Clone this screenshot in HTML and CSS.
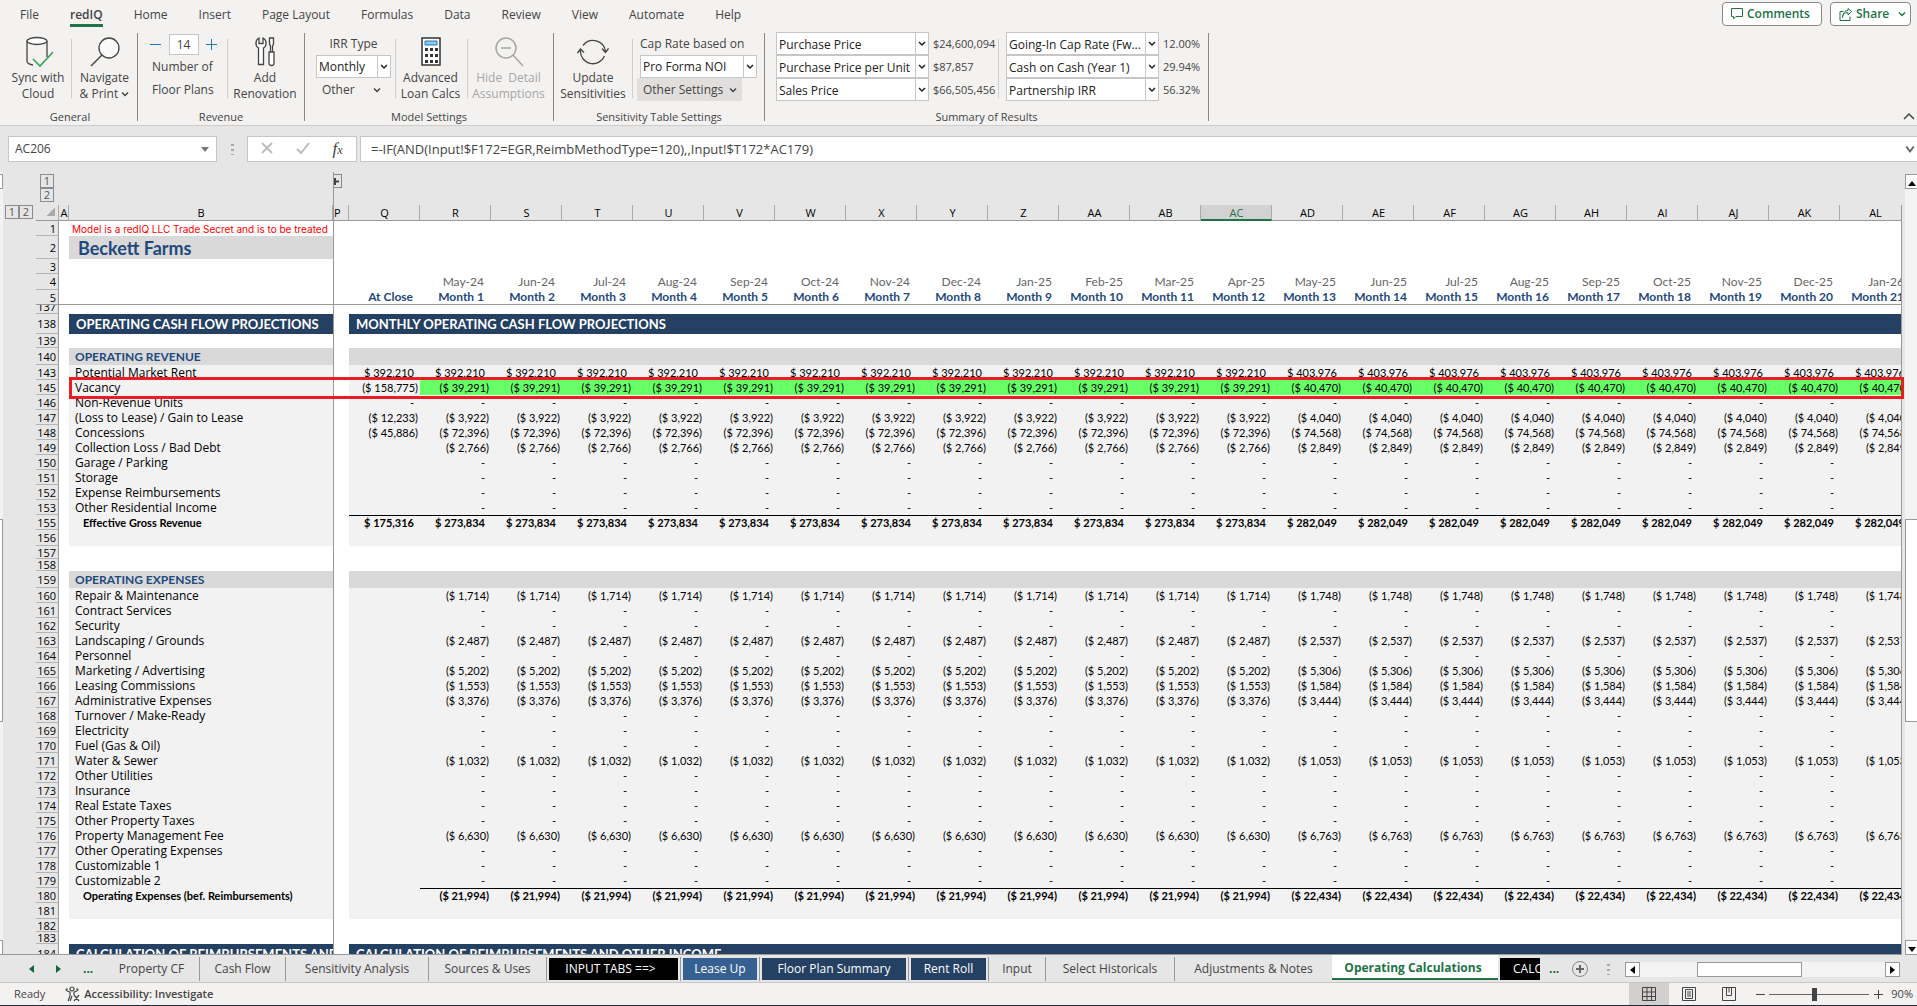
FILE: index.html
```html
<!DOCTYPE html>
<html lang="en">
<head>
<meta charset="utf-8">
<title>Beckett Farms - Operating Calculations</title>
<link rel="stylesheet" href="styles.css">
</head>
<body>
<svg class="defs" aria-hidden="true">
  <symbol id="chev" viewBox="0 0 8 8"><path d="M1 2.5l3 3 3-3" fill="none" stroke="currentColor" stroke-width="1.5"/></symbol>
</svg>
<header class="ribbon">
  <div class="menu">
    <nav class="tabs">
      <a class="tab t-file" href="#">File</a><a class="tab t-rediq active" href="#">redIQ</a><a class="tab" href="#">Home</a><a class="tab" href="#">Insert</a><a class="tab" href="#">Page Layout</a><a class="tab" href="#">Formulas</a><a class="tab" href="#">Data</a><a class="tab" href="#">Review</a><a class="tab" href="#">View</a><a class="tab" href="#">Automate</a><a class="tab" href="#">Help</a>
    </nav>
    <div class="actions">
      <button class="act act-comments"><svg width="12" height="12" viewBox="0 0 12 12"><path d="M.5.5h11v8H5L2.500 11V8.500h-2z" fill="none" stroke="currentColor"/></svg>Comments</button>
      <button class="act act-share"><svg width="13" height="13" viewBox="0 0 13 13"><path d="M4.500 3.500H1v9h10V8.500M3.500 9.500C3.500 6 6 4.500 9 4.500V7l3.500-3.500L9 .5v2C6 2.500 4 5 3.500 9.500" fill="none" stroke="currentColor"/></svg>Share<svg class="share-chev" width="8" height="8"><use href="#chev"/></svg></button>
    </div>
  </div>
  <div class="groups">
    <section class="group g-general">
      <div class="tools">
        <button class="big w-sync"><svg width="30" height="32" viewBox="-2 0 30 32"><g fill="none" stroke="#444" stroke-width="1.300"><path d="M2 5v20c0 2 3 3.500 6 4M22 5v16"/><ellipse cx="12" cy="5" rx="10" ry="3.500" fill="#fff"/><path d="M8 23l7 7L28 16" stroke="#3aa35b" stroke-width="1.600"/></g></svg><span>Sync with<br>Cloud</span></button>
        <i class="sep"></i>
        <button class="big w-nav"><svg width="30" height="32" viewBox="0 0 30 32"><circle cx="19" cy="12" r="10" fill="#fafafa" stroke="#444" stroke-width="1.300"/><path d="M12 19L1 30" stroke="#444" stroke-width="1.500"/></svg><span>Navigate<br>&amp; Print <svg width="8" height="8"><use href="#chev"/></svg></span></button>
      </div>
      <h2>General</h2>
    </section>
    <section class="group g-revenue">
      <div class="tools">
        <div class="stack w-plans">
          <div class="stepper"><button class="step" aria-label="Fewer"><svg width="11" height="11" viewBox="0 0 11 11"><path d="M0 5.500h11" stroke="#1e7ac0"/></svg></button><input id="plans" value="14"><button class="step" aria-label="More"><svg width="11" height="11" viewBox="0 0 11 11"><path d="M0 5.500h11M5.500 0v11" stroke="#1e7ac0"/></svg></button></div>
          <label for="plans">Number of<br>Floor Plans</label>
        </div>
        <i class="sep"></i>
        <button class="big w-reno"><svg width="20" height="32" viewBox="0 0 20 32"><g fill="#fff" stroke="#444" stroke-width="1.300"><path d="M4 2C0 4 0 10 3.500 12v16.500h5V12C12 10 12 4 8 2v5.500H4z"/><path d="M14.500 2h4v6l-1 2v6h-2v-6l-1-2zM14 16h5v11a2.500 2.500 0 01-5 0z"/></g></svg><span>Add<br>Renovation</span></button>
      </div>
      <h2>Revenue</h2>
    </section>
    <section class="group g-model">
      <div class="tools">
        <div class="stack w-irr">
          <label class="cap center" for="irr">IRR Type</label>
          <span class="combo w75"><select id="irr"><option>Monthly</option></select><svg width="8" height="8"><use href="#chev"/></svg></span>
          <button class="drop">Other<svg width="8" height="8"><use href="#chev"/></svg></button>
        </div>
        <i class="sep"></i>
        <button class="big w-adv"><svg width="20" height="32" viewBox="0 0 20 32"><rect x="1" y="2" width="18" height="27" fill="#fff" stroke="#333" stroke-width="1.500"/><path d="M4 5h12v4H4z" fill="#8ec9f0" stroke="#2878b8"/><path d="M4 12h3v3H4zm5 0h3v3H9zm5 0h3v3h-3zM4 18h3v3H4zm5 0h3v3H9zm5 0h3v3h-3zM4 24h3v3H4zm5 0h3v3H9zm5 0h3v3h-3z" fill="#333"/></svg><span>Advanced<br>Loan Calcs</span></button>
        <i class="sep"></i>
        <button class="big w-hide" disabled><svg width="32" height="32" viewBox="0 0 32 32"><g fill="none" stroke="#a6a6a6" stroke-width="1.500"><circle cx="13" cy="12" r="10"/><path d="M8 12h10M20 19l10 11"/></g></svg><span>Hide&nbsp; Detail<br>Assumptions</span></button>
      </div>
      <h2>Model Settings</h2>
    </section>
    <section class="group g-sens">
      <div class="tools">
        <button class="big w-upd"><svg width="32" height="32" viewBox="0 0 32 32"><g fill="none" stroke="#444" stroke-width="1.300"><path d="M6 9.500A12.500 12.500 0 0128.500 15.500M27.500 20A12.500 12.500 0 013.500 14M25 12.500l3.500 4 3-4M.5 17l3-4 3.500 3.500"/></g></svg><span>Update<br>Sensitivities</span></button>
        <i class="sep"></i>
        <div class="stack w-cap">
          <label class="cap" for="cap">Cap Rate based on</label>
          <span class="combo w117"><select id="cap"><option>Pro Forma NOI</option></select><svg width="8" height="8"><use href="#chev"/></svg></span>
          <button class="drop shaded">Other Settings<svg width="8" height="8"><use href="#chev"/></svg></button>
        </div>
      </div>
      <h2>Sensitivity Table Settings</h2>
    </section>
    <section class="group g-sum">
      <div class="tools">
        <div class="results w-sum">
          <span class="combo"><select aria-label="Result 1"><option>Purchase Price</option></select><svg width="8" height="8"><use href="#chev"/></svg></span><output>$24,600,094</output>
          <span class="combo"><select aria-label="Result 2"><option>Purchase Price per Unit</option></select><svg width="8" height="8"><use href="#chev"/></svg></span><output>$87,857</output>
          <span class="combo"><select aria-label="Result 3"><option>Sales Price</option></select><svg width="8" height="8"><use href="#chev"/></svg></span><output>$66,505,456</output>
        </div>
        <i class="sep"></i>
        <div class="results">
          <span class="combo"><select aria-label="Result 4"><option>Going-In Cap Rate (Fw...</option></select><svg width="8" height="8"><use href="#chev"/></svg></span><output>12.00%</output>
          <span class="combo"><select aria-label="Result 5"><option>Cash on Cash (Year 1)</option></select><svg width="8" height="8"><use href="#chev"/></svg></span><output>29.94%</output>
          <span class="combo"><select aria-label="Result 6"><option>Partnership IRR</option></select><svg width="8" height="8"><use href="#chev"/></svg></span><output>56.32%</output>
        </div>
      </div>
      <h2>Summary of Results</h2>
    </section>
    <button class="collapse" aria-label="Collapse ribbon"><svg width="12" height="8" viewBox="0 0 12 8"><path d="M1 7l5-5 5 5" fill="none" stroke="#444" stroke-width="1.500"/></svg></button>
  </div>
</header>

<div class="formula-bar">
  <div class="namebox"><input aria-label="Name box" value="AC206"><svg width="8" height="5" viewBox="0 0 8 5"><path d="M0 0h8L4 5z" fill="#777"/></svg></div>
  <span class="dots"></span>
  <div class="fx">
    <button aria-label="Cancel"><svg width="12" height="12" viewBox="0 0 12 12"><path d="M1 1l10 10M11 1L1 11" stroke="#bbb" stroke-width="1.800"/></svg></button>
    <button aria-label="Enter"><svg width="14" height="12" viewBox="0 0 14 12"><path d="M1 7l4 4 8-10" fill="none" stroke="#bbb" stroke-width="2"/></svg></button>
    <button class="fn" aria-label="Insert function"><i>f<small>x</small></i></button>
  </div>
  <div class="formula"><input aria-label="Formula" value="=-IF(AND(Input!$F172=EGR,ReimbMethodType=120),,Input!$T172*AC179)"><svg width="10" height="10" viewBox="0 0 8 8"><path d="M1 2l3 4 3-4" fill="none" stroke="#666" stroke-width="1.500"/></svg></div>
</div>

<main class="work">
  <div class="edge"><i class="cap-box"></i><i class="thumb"></i><i class="cap-box end"></i></div>
  <div class="pane">
    <div class="outline">
      <div class="col-levels"><button class="lvl">1</button><button class="lvl">2</button></div>
      <div class="expand"><button class="plus" aria-label="Expand columns"><svg width="7" height="9" viewBox="0 0 7 9"><path d="M0 4.500h5M1 1v7" stroke="#444" stroke-width="2"/></svg></button></div>
    </div>
    <div class="grid-wrap">
      <div class="gutter"><button class="lvl">1</button><button class="lvl">2</button></div>
      <div class="grid"><table id="sheet"><colgroup><col class="c-n"><col class="c-a"><col class="c-b"><col class="c-p"><col class="c-v" span="22"></colgroup><thead></thead><tbody></tbody></table></div>
    </div>
    <div class="marker"></div>
  </div>
  <div class="vscroll"><button aria-label="Scroll up"><svg width="8" height="5" viewBox="0 0 8 5"><path d="M0 5h8L4 0z"/></svg></button><i class="thumb"></i><button class="end" aria-label="Scroll down"><svg width="8" height="5" viewBox="0 0 8 5"><path d="M0 0h8L4 5z"/></svg></button></div>
</main>

<nav class="sheets">
  <div class="nav-arrows"><button aria-label="Previous"><svg width="5" height="8" viewBox="0 0 5 8"><path d="M5 0v8L0 4z"/></svg></button><button aria-label="Next"><svg width="5" height="8" viewBox="0 0 5 8"><path d="M0 0v8l5-4z"/></svg></button><button>...</button></div>
  <a class="st s96" href="#">Property CF</a><a class="st s86" href="#">Cash Flow</a><a class="st s143" href="#">Sensitivity Analysis</a><a class="st s118" href="#">Sources &amp; Uses</a><a class="st s134" href="#"><b class="black">INPUT TABS ==&gt;</b></a><a class="st s79" href="#"><b class="blue">Lease Up</b></a><a class="st s149" href="#"><b class="navy">Floor Plan Summary</b></a><a class="st s80" href="#"><b class="navy">Rent Roll</b></a><a class="st s57" href="#">Input</a><a class="st s129" href="#">Select Historicals</a><a class="st s157 last" href="#">Adjustments &amp; Notes</a><a class="st current" href="#">Operating Calculations</a><a class="st cut" href="#"><b class="black">CALC</b></a>
  <button class="more">...</button>
  <button class="add" aria-label="New sheet"><svg width="18" height="18" viewBox="0 0 18 18"><circle cx="9" cy="9" r="7.500" fill="none" stroke="#888"/><path d="M9 5v8M5 9h8" stroke="#666" stroke-width="2"/></svg></button>
  <span class="dots"></span>
  <div class="hscroll"><button aria-label="Scroll left"><svg width="5" height="8" viewBox="0 0 5 8"><path d="M5 0v8L0 4z"/></svg></button><i class="hthumb"></i><button aria-label="Scroll right"><svg width="5" height="8" viewBox="0 0 5 8"><path d="M0 0v8l5-4z"/></svg></button></div>
</nav>

<footer class="status">
  <span class="ready">Ready</span>
  <button class="access"><svg width="16" height="16" viewBox="0 0 16 16"><g fill="none" stroke="#444" stroke-width="1.200"><circle cx="7" cy="3" r="2"/><path d="M1 3c0 2 3 3 4 3v4l-2 5M13 3c0 2-3 3-4 3v3M7 10l-2 5M9 9l5 6M14 9l-5 6M1 3h2M11 3h2"/></g></svg>Accessibility: Investigate</button>
  <div class="views">
    <button class="on" aria-label="Normal"><svg width="14" height="14" viewBox="0 0 14 14"><path d="M.5.5h13v13H.5zM.5 5h13M.5 9.500h13M5 .5v13M9.500.5v13" fill="none" stroke="#444"/></svg></button>
    <button aria-label="Page layout"><svg width="14" height="14" viewBox="0 0 14 14"><path d="M.5.5h13v13H.5zM3.500 2.500h7v9h-7zM5 5h4M5 7h4M5 9h4" fill="none" stroke="#444"/></svg></button>
    <button aria-label="Page break"><svg width="14" height="14" viewBox="0 0 14 14"><path d="M.5.5h13v13H.5zM4.500 .5v8h5V.5M7 .5v5" fill="none" stroke="#444"/></svg></button>
  </div>
  <button class="zoom-btn" aria-label="Zoom out"><svg width="9" height="9" viewBox="0 0 9 9"><path d="M0 4.500h9" stroke="#444"/></svg></button>
  <input class="zoom" type="range" aria-label="Zoom" min="0" max="100" value="45">
  <button class="zoom-btn" aria-label="Zoom in"><svg width="9" height="9" viewBox="0 0 9 9"><path d="M0 4.500h9M4.500 0v9" stroke="#444"/></svg></button>
  <span class="pct">90%</span>
</footer>
<script src="sheet.js"></script>
</body>
</html>
```
FILE: styles.css
```css
* { box-sizing: border-box; }
html, body { height: 100%; }
body { margin: 0; display: flex; flex-direction: column; overflow: hidden; background: #e6e6e6; color: #444; font: 12px/16px "Open Sans", "Noto Sans", sans-serif; }
button { margin: 0; padding: 0; border: 0; background: none; color: inherit; font: inherit; }
input, select { font: inherit; color: inherit; border: 0; padding: 0; margin: 0; min-width: 0; outline: 0; }
a { color: inherit; text-decoration: none; }
.defs { display: none; }

/* Ribbon */
.ribbon { flex: none; background: #f3f2f1; border-bottom: 1px solid #cfcdcb; height: 126px; }
.menu { display: flex; justify-content: space-between; height: 30px; }
.tabs { display: flex; padding-left: 20px; gap: 31px; }
.tab { height: 27px; padding-top: 7px; white-space: nowrap; }
.t-rediq { font-weight: 600; border-bottom: 3px solid #217346; }
.actions { display: flex; gap: 8px; padding: 2px 6px 0 0; }
.act { display: flex; align-items: center; gap: 4px; height: 24px; padding: 0 8px; border: 1px solid #8a8886; border-radius: 4px; background: #fff; color: #217346; font-weight: 600; }
.act-comments { width: 100px; }
.act-share { width: 81px; }
.share-chev { margin-left: auto; margin-right: -4px; }
.groups { display: flex; position: relative; padding-left: 3px; }
.group { display: flex; flex-direction: column; height: 88px; margin-top: 3px; border-right: 1px solid #8a8886; }
.group h2 { margin: auto 0 0; font-size: 11px; line-height: 8px; font-weight: 400; text-align: center; }
.g-general { width: 135px; }
.g-revenue { width: 167px; }
.g-model { width: 249px; }
.g-sens { width: 211px; }
.g-sum { width: 444px; }
.tools { display: flex; height: 70px; }
.sep { width: 1px; margin: 6px 0 5px; background: #d0cecc; flex: none; }
.big { display: flex; flex-direction: column; align-items: center; gap: 2px; padding-top: 3px; white-space: nowrap; flex: none; }
.big:disabled { color: #a6a6a6; }
.w-sync { width: 68px; padding-left: 2px; }
.w-nav { flex: 1; }
.w-reno { flex: 1; padding-right: 2px; }
.w-adv { width: 71px; padding-right: 2px; }
.w-hide { flex: 1; padding-right: 4px; }
.w-upd { width: 78px; }
.stack { display: flex; flex-direction: column; }
.w-plans { width: 89px; }
.w-plans label { line-height: 23px; padding-left: 14px; }
.stepper { display: flex; align-items: center; justify-content: center; gap: 6px; height: 22px; padding-left: 2px; }
.stepper input { width: 30px; height: 21px; border: 1px solid #c8c6c4; background: #fff; text-align: center; }
.step { width: 14px; line-height: 8px; }
.w-irr { width: 90px; padding: 0 4px 0 11px; }
.cap { height: 22px; line-height: 22px; }
.center { text-align: center; }
.combo { display: flex; align-items: center; width: 153px; height: 23px; border: 1px solid #c8c6c4; background: #fff; color: #222; }
.combo select { flex: 1; height: 21px; padding-left: 2px; appearance: none; background: none; }
.combo svg { width: 13px; height: 21px; padding: 6px 2px; border-left: 1px solid #c8c6c4; flex: none; }
.w75 { width: 75px; }
.w117 { width: 117px; }
.drop { display: flex; align-items: center; justify-content: space-between; height: 23px; padding: 0 10px 0 6px; }
.w-cap { padding-left: 7px; }
.shaded { width: 105px; margin-left: -3px; padding: 0 5px 0 6px; background: #e1dfdd; }
.results { display: grid; grid-template-columns: 153px auto; grid-auto-rows: 23px; column-gap: 4px; margin-left: 7px; margin-top: -1px; line-height: 23px; align-content: start; }
.results output { font-size: 11px; }
.w-sum { margin-left: 11px; width: 222px; }
.collapse { position: absolute; right: 2px; bottom: 0; height: 10px; line-height: 8px; }

/* Formula bar */
.formula-bar { flex: none; display: flex; align-items: center; height: 46px; padding: 0 0 0 8px; }
.namebox, .fx, .formula { display: flex; align-items: center; height: 26px; background: #fff; border: 1px solid #c6c6c6; font-size: 13px; }
.namebox { width: 209px; padding: 0 7px 0 6px; }
.namebox input { flex: 1; font-size: 12px; }
.dots { width: 3px; height: 11px; margin: 0 13px 0 14px; background: repeating-linear-gradient(#aaa 0 2px, transparent 2px 5px); flex: none; }
.fx { width: 110px; justify-content: space-around; padding: 0 2px; }
.fn { font: 17px/20px "Liberation Serif", serif; }
.fn small { font-size: 12px; }
.formula { flex: 1; margin-left: 3px; border-right: 0; padding: 0 2px 0 10px; }
.formula input { flex: 1; background: none; }

/* Work area */
.work { flex: 1; min-height: 0; display: flex; }
.edge, .vscroll { display: grid; grid-template-rows: 15px 330fr 203fr 218fr 15px; padding-top: 2px; flex: none; }
.edge { width: 3px; background: #f3f3f3; }
.edge i, .vscroll i, .vscroll button { border: 1px solid #999; background: #fff; }
.edge i { border-left: 0; }
.thumb { grid-row: 3; }
.end { grid-row: 5; }
.pane { flex: 1; min-width: 0; position: relative; display: flex; flex-direction: column; border-bottom: 1px solid #999; }
.outline { display: flex; height: 33px; flex: none; padding-left: 37px; }
.col-levels { display: flex; flex-direction: column; width: 293px; padding-top: 2px; }
.lvl { width: 14px; height: 14px; border: 1px solid #888c94; font-size: 11px; line-height: 12px; color: #555; flex: none; text-align: center; }
.expand { border-left: 1px solid #999; padding-top: 2px; }
.plus { display: flex; align-items: center; width: 8px; height: 14px; border: 1px solid #888; border-left: 0; }
.grid-wrap { flex: 1; min-height: 0; display: flex; }
.gutter { width: 33px; display: flex; padding-left: 2px; flex: none; }
.grid { flex: 1; min-width: 0; overflow: hidden; background: linear-gradient(#e6e6e6 15px, #fff 15px); border-right: 1px solid #999; }
.marker { position: absolute; left: 66px; right: -2px; top: 205px; height: 22px; border: 3px solid #ed1c24; }
.vscroll { width: 12px; margin-left: 3px; background: linear-gradient(#e6e6e6 2px, #f3f3f3 2px); }
.vscroll button { line-height: 8px; border-right: 0; }
.vscroll i { border-right: 0; }

table { table-layout: fixed; width: 1865px; border-collapse: separate; border-spacing: 0; color: #000; font-size: 11px; line-height: 12px; }
.c-n { width: 23px; } .c-a { width: 10px; } .c-b { width: 264px; } .c-p { width: 16px; } .c-v { width: 71px; }
td, th { padding: 0; font-weight: 400; white-space: nowrap; }
thead th { height: 16px; padding: 1px 0 0 1px; border-right: 1px solid #aaa; border-bottom: 1px solid #999; background: #e6e6e6; }
thead th:nth-child(4) { border-left: 1px solid #999; padding: 0; text-align: left; }
thead th.sel { background: #d2d2d2; color: #217346; border-bottom: 2px solid #217346; }
thead th.corner { background: linear-gradient(135deg, transparent 50%, #aaa 50%) 11px 3px / 8px 8px no-repeat #e6e6e6; }
tbody th { text-align: right; padding: 0 2px 0 0; line-height: 11px; background: #e6e6e6; border-right: 1px solid #999; border-bottom: 1px solid #b4b4b4; }
.p { border-left: 1px solid #999; background: #fff; }
.frozen td, .frozen th { border-bottom: 1px solid #999; }
.h9 { height: 9px; } .h12 { height: 12px; } .h13 { height: 13px; } .h14 { height: 14px; } .h15 { height: 15px; } .h16 { height: 16px; } .h17 { height: 17px; } .h20 { height: 20px; } .h23 { height: 23px; }
.h9 span { display: block; overflow: hidden; height: 8px; line-height: 4px; }
.lab { padding-left: 6px; font-size: 12px; }
.notice { padding-left: 3px; color: #f00; font: 10px/12px Inter, sans-serif; }
.title { padding-left: 9px; background: #d9d9d9; color: #1f497d; font: 700 18px/20px Lato, sans-serif; }
.date, .month { text-align: right; padding: 0 7px 1px 0; font-family: Lato, sans-serif; font-size: 12px; }
.date { color: #666; }
.month { color: #1f497d; font-weight: 700; }
.bar { background: #244062; color: #fff; padding-left: 7px; font: 700 13px/16px Lato, sans-serif; }
.clip { overflow: hidden; }
.sub { background: #d9d9d9; color: #1f497d; padding-left: 6px; font: 700 12px/14px Lato, sans-serif; }
.body { background: #f2f2f2; }
.num { text-align: right; padding-right: 6px; font-family: Lato, sans-serif; }
.neg { padding-right: 2px; }
.green { background: #66ff66; }
.total td { font-weight: 700; }
.total .lab { padding-left: 14px; font: 700 11px/12px Lato, sans-serif; }
.rule { border-top: 1px solid #000; }

/* Sheet tabs */
.sheets { flex: none; display: flex; height: 28px; border-bottom: 1px solid #c6c6c6; padding-right: 17px; }
.nav-arrows { display: flex; align-items: center; width: 104px; padding-left: 29px; gap: 22px; color: #0e6b38; fill: #0e6b38; font-weight: 700; }
.st { display: flex; align-items: center; justify-content: center; height: 24px; margin-top: 2px; border-right: 1px solid #999; flex: none; white-space: nowrap; }
.st b { flex: 1; margin: 0 2px; height: 22px; line-height: 22px; text-align: center; color: #fff; font-weight: 400; }
.black { background: #000; } .blue { background: #366092; } .navy { background: #244062; }
.s96 { width: 96px; } .s86 { width: 86px; } .s143 { width: 143px; } .s118 { width: 118px; } .s134 { width: 134px; } .s79 { width: 79px; } .s149 { width: 149px; } .s80 { width: 80px; } .s57 { width: 57px; } .s129 { width: 129px; } .s157 { width: 157px; }
.s134 b { padding-right: 6px; }
.last { border-right: 0; }
.st.current { width: 166px; margin: 0; padding: 2px 4px 0 0; height: 25px; background: #fff; color: #217346; font-weight: 700; border-right: 0; border-bottom: 2px solid #217346; }
.cut { width: 42px; border-right: 0; overflow: hidden; }
.st.cut b { padding-left: 13px; text-align: left; overflow: hidden; margin-right: 0; }
.more { color: #0e6b38; font-weight: 700; margin: 0 12px 0 9px; }
.add { line-height: 8px; }
.sheets .dots { margin: 9px 15px 0 18px; }
.hscroll { flex: 1; display: flex; justify-content: space-between; height: 15px; margin-top: 7px; background: #f3f3f3; }
.hscroll button { width: 15px; border: 1px solid #999; background: #fff; line-height: 8px; }
.hthumb { width: 105px; margin-right: 26px; border: 1px solid #999; background: #fff; }

/* Status bar */
.status { flex: none; display: flex; align-items: center; height: 23px; padding: 0 4px 0 14px; background: #f3f2f1; border-bottom: 1px solid #1f2d3a; font-size: 11px; }
.access { display: flex; align-items: center; gap: 3px; margin-left: 20px; font-weight: 600; }
.views { display: flex; margin-left: auto; align-self: stretch; }
.views button { width: 40px; line-height: 8px; }
.views .on { background: #d2d0ce; }
.zoom-btn { line-height: 8px; width: 12px; margin: 0 3px; }
.views + .zoom-btn { margin-left: 5px; }
.zoom { width: 100px; height: 16px; appearance: none; background: linear-gradient(#666, #666) center / 100% 1px no-repeat; }
.zoom::-webkit-slider-thumb { appearance: none; width: 5px; height: 13px; background: #444; }
.pct { width: 26px; text-align: right; }
```
FILE: sheet.js
```js
// Builds the operating cash flow sheet: 12 months of year one, then months 13-21.
const letters = ['Q','R','S','T','U','V','W','X','Y','Z','AA','AB','AC','AD','AE','AF','AG','AH','AI','AJ','AK','AL'];
const names = ['Jan','Feb','Mar','Apr','May','Jun','Jul','Aug','Sep','Oct','Nov','Dec'];
const months = Array.from({ length: 21 }, (_, i) => i);
const date = i => names[(i + 4) % 12] + '-' + (24 + Math.floor((i + 4) / 12));

document.querySelector('#sheet thead').innerHTML =
  '<tr><th class="corner"></th><th>A</th><th>B</th><th>P</th>' +
  letters.map(l => `<th${l === 'AC' ? ' class="sel"' : ''}>${l}</th>`).join('') + '</tr>';

const row = (n, h, b, rest, cls = '') =>
  `<tr class="${cls}"><th class="h${h}"><span>${n}</span></th><td></td>${b}<td class="p"></td>${rest}</tr>`;
const blank = (n, h, cls) => row(n, h, '<td></td>', '<td colspan="22"></td>', cls);
const filler = (n, h) => row(n, h, '<td class="body"></td>', '<td class="body" colspan="22"></td>');
const bar = (n, a, b) => row(n, 20, `<td class="bar"><div class="clip">${a}</div></td>`, `<td class="bar" colspan="22">${b}</td>`);
const sub = (n, a) => row(n, 17, `<td class="sub">${a}</td>`, '<td class="sub" colspan="22"></td>');
const num = (v, extra) => `<td class="body num${v.startsWith('(') ? ' neg' : ''}${extra}">${v}</td>`;

function line(n, label, y1 = '-', y2 = y1, q = '', o = {}) {
  const rule = o.rule ? ' rule' : '';
  const cells = num(q, o.ruleQ ? ' rule' : '') +
    months.map(i => num(i < 12 ? y1 : y2, rule + (o.green ? ' green' : ''))).join('');
  return row(n, 15, `<td class="body lab">${label}</td>`, cells, o.total ? 'total' : '');
}

document.querySelector('#sheet tbody').innerHTML = [
  row(1, 15, '<td class="notice">Model is a redIQ LLC Trade Secret and is to be treated</td>', '<td colspan="22"></td>'),
  row(2, 23, '<td class="title">Beckett Farms</td>', '<td colspan="22"></td>'),
  blank(3, 15),
  row(4, 16, '<td></td>', '<td></td>' + months.map(i => `<td class="date">${date(i)}</td>`).join('')),
  row(5, 15, '<td></td>', '<td class="month">At Close</td>' + months.map(i => `<td class="month">Month ${i + 1}</td>`).join(''), 'frozen'),
  blank(137, 9),
  bar(138, 'OPERATING CASH FLOW PROJECTIONS', 'MONTHLY OPERATING CASH FLOW PROJECTIONS'),
  blank(139, 14),
  sub(140, 'OPERATING REVENUE'),
  line(143, 'Potential Market Rent', '$ 392,210', '$ 403,976', '$ 392,210'),
  line(145, 'Vacancy', '($ 39,291)', '($ 40,470)', '($ 158,775)', { green: true }),
  line(146, 'Non-Revenue Units', '-', '-', '-'),
  line(147, '(Loss to Lease) / Gain to Lease', '($ 3,922)', '($ 4,040)', '($ 12,233)'),
  line(148, 'Concessions', '($ 72,396)', '($ 74,568)', '($ 45,886)'),
  line(149, 'Collection Loss / Bad Debt', '($ 2,766)', '($ 2,849)'),
  line(150, 'Garage / Parking'),
  line(151, 'Storage'),
  line(152, 'Expense Reimbursements'),
  line(153, 'Other Residential Income'),
  line(155, 'Effective Gross Revenue', '$ 273,834', '$ 282,049', '$ 175,316', { total: true, rule: true, ruleQ: true }),
  filler(156, 16),
  blank(157, 13), blank(158, 12),
  sub(159, 'OPERATING EXPENSES'),
  line(160, 'Repair &amp; Maintenance', '($ 1,714)', '($ 1,748)'),
  line(161, 'Contract Services'),
  line(162, 'Security'),
  line(163, 'Landscaping / Grounds', '($ 2,487)', '($ 2,537)'),
  line(164, 'Personnel'),
  line(165, 'Marketing / Advertising', '($ 5,202)', '($ 5,306)'),
  line(166, 'Leasing Commissions', '($ 1,553)', '($ 1,584)'),
  line(167, 'Administrative Expenses', '($ 3,376)', '($ 3,444)'),
  line(168, 'Turnover / Make-Ready'),
  line(169, 'Electricity'),
  line(170, 'Fuel (Gas &amp; Oil)'),
  line(171, 'Water &amp; Sewer', '($ 1,032)', '($ 1,053)'),
  line(172, 'Other Utilities'),
  line(173, 'Insurance'),
  line(174, 'Real Estate Taxes'),
  line(175, 'Other Property Taxes'),
  line(176, 'Property Management Fee', '($ 6,630)', '($ 6,763)'),
  line(177, 'Other Operating Expenses'),
  line(178, 'Customizable 1'),
  line(179, 'Customizable 2'),
  line(180, 'Operating Expenses (bef. Reimbursements)', '($ 21,994)', '($ 22,434)', '', { total: true, rule: true }),
  filler(181, 16),
  blank(182, 13), blank(183, 12),
  bar(184, 'CALCULATION OF REIMBURSEMENTS AND OTHER INCOME', 'CALCULATION OF REIMBURSEMENTS AND OTHER INCOME')
].join('');
```
